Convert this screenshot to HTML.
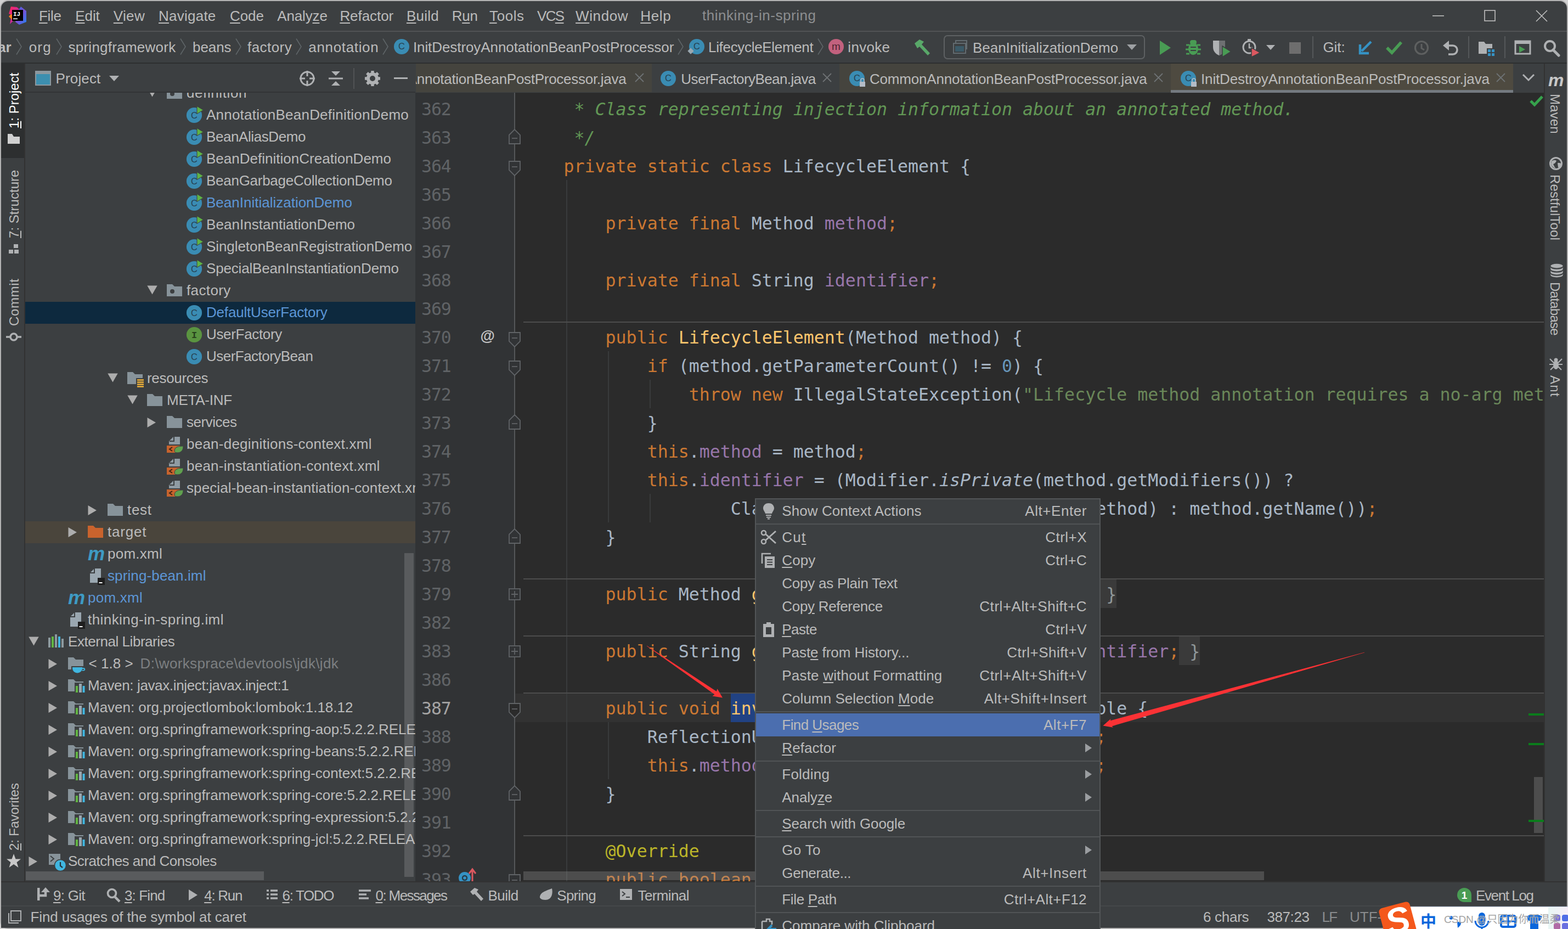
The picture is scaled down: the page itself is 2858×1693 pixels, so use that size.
<!DOCTYPE html>
<html lang="en"><head><meta charset="utf-8"><title>thinking-in-spring</title><style>
html,body{margin:0;padding:0;}
body{width:2858px;height:1693px;position:relative;overflow:hidden;background:#d2d2d2;font-family:"Liberation Sans", "Noto Sans CJK SC", sans-serif;}
.t{position:absolute;white-space:pre;font-family:"Liberation Sans", "Noto Sans CJK SC", sans-serif;}
.c{position:absolute;white-space:pre;font-family:"DejaVu Sans Mono", "Liberation Mono", monospace;font-size:31.59px;height:52px;line-height:52px;color:#a9b7c6;}
.ln{position:absolute;white-space:pre;font-family:"DejaVu Sans Mono", "Liberation Mono", monospace;font-size:31.56px;height:52px;line-height:52px;color:#606366;letter-spacing:-1.1px;}
u{text-decoration:underline;text-decoration-thickness:2px;text-underline-offset:3px;}
.fd{display:inline-block;position:relative;top:-1px;height:52px;line-height:54px;vertical-align:top;background:#3a3a3a;color:#8f9799}
.sel{display:inline-block;position:relative;top:-1px;height:52px;line-height:54px;vertical-align:top;background:#214283}
.k{color:#cc7832} .f{color:#9876aa} .s{color:#6a8759} .d{color:#629755;font-style:italic} .n{color:#6897bb} .m{color:#ffc66d} .a{color:#bbb529} .i{font-style:italic}
.v{position:absolute;white-space:pre;font-family:"Liberation Sans", "Noto Sans CJK SC", sans-serif;font-size:26px;color:#bbbbbb;line-height:30px;height:30px;transform-origin:0 0;}
</style></head>
<body>
<div style="position:absolute;left:2px;top:2px;width:2854px;height:1689px;background:#3c3f41;border-radius:13px 13px 0 13px;box-shadow:0 0 0 2px #b4b4b4;"></div>
<div style="position:absolute;left:2px;top:56px;width:2854px;height:2px;background:#515355;"></div>
<div style="position:absolute;left:2px;top:114px;width:2854px;height:2px;background:#2d2f30;"></div>
<svg style="position:absolute;left:14px;top:10px;" width="36" height="36" viewBox="0 0 36 36">
<defs><linearGradient id="lg1" x1="0" y1="0" x2="1" y2="1"><stop offset="0" stop-color="#fe2857"/><stop offset="1" stop-color="#b02ad0"/></linearGradient>
<linearGradient id="lg2" x1="0" y1="0" x2="1" y2="1"><stop offset="0" stop-color="#2d6be8"/><stop offset="0.5" stop-color="#7a4fd6"/><stop offset="1" stop-color="#1f86f5"/></linearGradient></defs>
<polygon points="6,2 17,3 21,7 20,20 8,30 4,34 7,17 2,15" fill="url(#lg1)"/>
<polygon points="2,20 6,16 9,17 8,26" fill="#fc801d"/>
<polygon points="24,2 34,10 34,30 21,35 14,30 20,8" fill="url(#lg2)"/>
<rect x="8" y="8" width="20" height="20" fill="#000"/>
<text x="10" y="18.5" font-family="Liberation Mono, monospace" font-weight="bold" font-size="11" fill="#fff">IJ</text>
<rect x="10" y="23.5" width="8" height="1.6" fill="#fff"/>
</svg>
<div class="t" style="left:71.0px;top:9.0px;height:40px;line-height:40px;font-size:26px;color:#bbbbbb;letter-spacing:-0.35px;"><u>F</u>ile</div>
<div class="t" style="left:137.2px;top:9.0px;height:40px;line-height:40px;font-size:26px;color:#bbbbbb;letter-spacing:-0.05px;"><u>E</u>dit</div>
<div class="t" style="left:206.8px;top:9.0px;height:40px;line-height:40px;font-size:26px;color:#bbbbbb;letter-spacing:0.33px;"><u>V</u>iew</div>
<div class="t" style="left:289.0px;top:9.0px;height:40px;line-height:40px;font-size:26px;color:#bbbbbb;letter-spacing:0.24px;"><u>N</u>avigate</div>
<div class="t" style="left:419.1px;top:9.0px;height:40px;line-height:40px;font-size:26px;color:#bbbbbb;letter-spacing:-0.11px;"><u>C</u>ode</div>
<div class="t" style="left:505.2px;top:9.0px;height:40px;line-height:40px;font-size:26px;color:#bbbbbb;letter-spacing:-0.14px;">Analy<u>z</u>e</div>
<div class="t" style="left:619.4px;top:9.0px;height:40px;line-height:40px;font-size:26px;color:#bbbbbb;letter-spacing:-0.07px;"><u>R</u>efactor</div>
<div class="t" style="left:740.9px;top:9.0px;height:40px;line-height:40px;font-size:26px;color:#bbbbbb;letter-spacing:0.22px;"><u>B</u>uild</div>
<div class="t" style="left:823.7px;top:9.0px;height:40px;line-height:40px;font-size:26px;color:#bbbbbb;letter-spacing:-0.27px;">R<u>u</u>n</div>
<div class="t" style="left:892.1px;top:9.0px;height:40px;line-height:40px;font-size:26px;color:#bbbbbb;letter-spacing:0.56px;"><u>T</u>ools</div>
<div class="t" style="left:978.9px;top:9.0px;height:40px;line-height:40px;font-size:26px;color:#bbbbbb;letter-spacing:-1.60px;">VC<u>S</u></div>
<div class="t" style="left:1049.1px;top:9.0px;height:40px;line-height:40px;font-size:26px;color:#bbbbbb;letter-spacing:0.59px;"><u>W</u>indow</div>
<div class="t" style="left:1167.2px;top:9.0px;height:40px;line-height:40px;font-size:26px;color:#bbbbbb;letter-spacing:0.66px;"><u>H</u>elp</div>
<div class="t" style="left:1280px;top:8.0px;height:40px;line-height:40px;font-size:26px;color:#8c8e90;letter-spacing:0.53px;">thinking-in-spring</div>
<svg style="position:absolute;left:2600px;top:10px;" width="240" height="40" viewBox="0 0 240 40">
<rect x="11" y="18" width="21" height="1.6" fill="#c0c0c0"/>
<rect x="106" y="9" width="19" height="19" fill="none" stroke="#c0c0c0" stroke-width="1.6"/>
<path d="M200 9 L220 29 M220 9 L200 29" stroke="#c0c0c0" stroke-width="1.6" fill="none"/>
</svg>
<div class="t" style="left:-4px;top:66.0px;height:40px;line-height:40px;font-size:26px;color:#bbbbbb;font-weight:bold;">ar</div>
<svg style="position:absolute;left:28px;top:69px;" width="14" height="32" viewBox="0 0 14 32"><path d="M2 1.5 L11 16 L2 30.5" stroke="#5f6568" stroke-width="1.6" fill="none"/></svg>
<svg style="position:absolute;left:101px;top:69px;" width="14" height="32" viewBox="0 0 14 32"><path d="M2 1.5 L11 16 L2 30.5" stroke="#5f6568" stroke-width="1.6" fill="none"/></svg>
<svg style="position:absolute;left:327px;top:69px;" width="14" height="32" viewBox="0 0 14 32"><path d="M2 1.5 L11 16 L2 30.5" stroke="#5f6568" stroke-width="1.6" fill="none"/></svg>
<svg style="position:absolute;left:428px;top:69px;" width="14" height="32" viewBox="0 0 14 32"><path d="M2 1.5 L11 16 L2 30.5" stroke="#5f6568" stroke-width="1.6" fill="none"/></svg>
<svg style="position:absolute;left:538px;top:69px;" width="14" height="32" viewBox="0 0 14 32"><path d="M2 1.5 L11 16 L2 30.5" stroke="#5f6568" stroke-width="1.6" fill="none"/></svg>
<svg style="position:absolute;left:696px;top:69px;" width="14" height="32" viewBox="0 0 14 32"><path d="M2 1.5 L11 16 L2 30.5" stroke="#5f6568" stroke-width="1.6" fill="none"/></svg>
<svg style="position:absolute;left:1234px;top:69px;" width="14" height="32" viewBox="0 0 14 32"><path d="M2 1.5 L11 16 L2 30.5" stroke="#5f6568" stroke-width="1.6" fill="none"/></svg>
<svg style="position:absolute;left:1489px;top:69px;" width="14" height="32" viewBox="0 0 14 32"><path d="M2 1.5 L11 16 L2 30.5" stroke="#5f6568" stroke-width="1.6" fill="none"/></svg>
<div class="t" style="left:52.7px;top:66.0px;height:40px;line-height:40px;font-size:26px;color:#bbbbbb;letter-spacing:1.21px;">org</div>
<div class="t" style="left:124.5px;top:66.0px;height:40px;line-height:40px;font-size:26px;color:#bbbbbb;letter-spacing:0.25px;">springframework</div>
<div class="t" style="left:351.1px;top:66.0px;height:40px;line-height:40px;font-size:26px;color:#bbbbbb;letter-spacing:-0.09px;">beans</div>
<div class="t" style="left:451.0px;top:66.0px;height:40px;line-height:40px;font-size:26px;color:#bbbbbb;letter-spacing:0.45px;">factory</div>
<div class="t" style="left:562.3px;top:66.0px;height:40px;line-height:40px;font-size:26px;color:#bbbbbb;letter-spacing:0.66px;">annotation</div>
<div class="t" style="left:752.9px;top:66.0px;height:40px;line-height:40px;font-size:26px;color:#bbbbbb;letter-spacing:-0.08px;">InitDestroyAnnotationBeanPostProcessor</div>
<div class="t" style="left:1291.0px;top:66.0px;height:40px;line-height:40px;font-size:26px;color:#bbbbbb;letter-spacing:-0.32px;">LifecycleElement</div>
<div class="t" style="left:1545.3px;top:66.0px;height:40px;line-height:40px;font-size:26px;color:#bbbbbb;letter-spacing:0.32px;">invoke</div>
<svg style="position:absolute;left:716px;top:69px;" width="36" height="36" viewBox="0 0 36 36"><circle cx="16" cy="16" r="14" fill="#3a8cb3"/><text x="16" y="21.4" text-anchor="middle" font-family="Liberation Sans, sans-serif" font-size="16.5" fill="#26404f">C</text></svg>
<svg style="position:absolute;left:1254px;top:69px;" width="36" height="36" viewBox="0 0 36 36"><circle cx="16" cy="16" r="14" fill="#3a8cb3"/><text x="16" y="21.4" text-anchor="middle" font-family="Liberation Sans, sans-serif" font-size="16.5" fill="#26404f">C</text></svg>
<svg style="position:absolute;left:1252px;top:86px;" width="14" height="14" viewBox="0 0 14 14"><rect x="3" y="3" width="8" height="8" transform="rotate(45 7 7)" fill="#9aa7b0"/></svg>
<svg style="position:absolute;left:1508px;top:69px;" width="36" height="36" viewBox="0 0 36 36"><circle cx="16" cy="16" r="14" fill="#c2617e"/><text x="16" y="22.3" text-anchor="middle" font-family="Liberation Sans, sans-serif" font-size="19" fill="#4a2530">m</text></svg>
<svg style="position:absolute;left:1664px;top:70px;" width="36" height="32" viewBox="0 0 36 32"><path d="M3 9 L12 2 L20 6 L16 11 L31 27 L27 31 L12 15 L8 18 Z" fill="#59a869"/></svg>
<div style="position:absolute;left:1720px;top:64px;width:363px;height:40px;border:2px solid #5e6163;border-radius:7px;background:#3c3f41;"></div>
<svg style="position:absolute;left:1736px;top:72px;" width="30" height="28" viewBox="0 0 30 28"><rect x="6" y="2" width="20" height="15" fill="none" stroke="#626b70" stroke-width="2"/><rect x="2" y="7" width="22" height="18" fill="#3c3f41" stroke="#626b70" stroke-width="2"/><rect x="5" y="12" width="16" height="10" fill="#3b5a68"/></svg>
<div class="t" style="left:1773px;top:67.0px;height:40px;line-height:40px;font-size:26px;color:#bbbbbb;letter-spacing:-0.04px;">BeanInitializationDemo</div>
<svg style="position:absolute;left:2052px;top:78px;" width="22" height="16" viewBox="0 0 22 16"><polygon points="2,3 20,3 11,13" fill="#9da0a3"/></svg>
<svg style="position:absolute;left:2112px;top:72px;" width="24" height="30" viewBox="0 0 24 30"><polygon points="2,2 22,15 2,28" fill="#499c54"/></svg>
<svg style="position:absolute;left:2160px;top:70px;" width="30" height="34" viewBox="0 0 30 34"><ellipse cx="15" cy="19" rx="9" ry="11" fill="#499c54"/><rect x="9" y="3" width="12" height="8" rx="4" fill="#499c54"/><path d="M2 12 H8 M22 12 H28 M1 20 H7 M23 20 H29 M2 28 H8 M22 28 H28" stroke="#499c54" stroke-width="3"/><path d="M10 16 H20 M10 22 H20" stroke="#3c3f41" stroke-width="2"/></svg>
<svg style="position:absolute;left:2208px;top:70px;" width="38" height="34" viewBox="0 0 38 34"><path d="M3 4 H25 V16 C25 24 19 29 14 31 C9 29 3 24 3 16 Z" fill="#afb1b3"/><path d="M14 4 H25 V16 C25 24 19 29 14 31 Z" fill="#6e7072"/><polygon points="20,14 36,24 20,34" fill="#499c54" stroke="#3c3f41" stroke-width="1.5"/></svg>
<svg style="position:absolute;left:2262px;top:70px;" width="38" height="34" viewBox="0 0 38 34"><circle cx="15" cy="16" r="11" fill="none" stroke="#afb1b3" stroke-width="3"/><path d="M15 9 V17 H21" stroke="#afb1b3" stroke-width="2.5" fill="none"/><rect x="12" y="1" width="6" height="4" fill="#afb1b3"/><polygon points="19,17 35,26 19,34" fill="#db5860" stroke="#3c3f41" stroke-width="1.5"/></svg>
<svg style="position:absolute;left:2306px;top:80px;" width="20" height="14" viewBox="0 0 20 14"><polygon points="2,2 18,2 10,11" fill="#afb1b3"/></svg>
<div style="position:absolute;left:2350px;top:77px;width:21px;height:21px;background:#6e6e6e;"></div>
<div style="position:absolute;left:2392px;top:66px;width:2px;height:40px;background:#55585a;"></div>
<div class="t" style="left:2411.5px;top:66.0px;height:40px;line-height:40px;font-size:26px;color:#bbbbbb;letter-spacing:-0.11px;">Git:</div>
<svg style="position:absolute;left:2474px;top:72px;" width="30" height="30" viewBox="0 0 30 30"><path d="M25 4 L8 21" stroke="#3592c4" stroke-width="4.5" fill="none"/><path d="M5 9 V25 H21" stroke="#3592c4" stroke-width="4.5" fill="none"/></svg>
<svg style="position:absolute;left:2524px;top:72px;" width="34" height="30" viewBox="0 0 34 30"><path d="M4 15 L13 24 L30 5" stroke="#499c54" stroke-width="5.5" fill="none"/></svg>
<svg style="position:absolute;left:2576px;top:72px;" width="32" height="32" viewBox="0 0 32 32"><circle cx="15" cy="15" r="11.5" fill="none" stroke="#5e6060" stroke-width="3.2"/><path d="M15 8 V16 L20 19" stroke="#5e6060" stroke-width="3" fill="none"/></svg>
<svg style="position:absolute;left:2628px;top:70px;" width="34" height="34" viewBox="0 0 34 34"><path d="M7 13 H20 a8 8 0 0 1 0 16 H12" stroke="#afb1b3" stroke-width="3.5" fill="none"/><polygon points="2,13 13,4 13,22" fill="#afb1b3"/></svg>
<div style="position:absolute;left:2676px;top:66px;width:2px;height:40px;background:#55585a;"></div>
<svg style="position:absolute;left:2693px;top:72px;" width="34" height="30" viewBox="0 0 34 30"><path d="M2 4 H12 L15 8 H27 V26 H2 Z" fill="#afb1b3"/><rect x="17" y="16" width="14" height="14" fill="#3c3f41"/><rect x="19" y="18" width="5" height="5" fill="#3592c4"/><rect x="26" y="18" width="5" height="5" fill="#3592c4"/><rect x="19" y="25" width="5" height="5" fill="#3592c4"/><rect x="26" y="25" width="5" height="5" fill="#3592c4"/></svg>
<div style="position:absolute;left:2742px;top:66px;width:2px;height:40px;background:#55585a;"></div>
<svg style="position:absolute;left:2760px;top:72px;" width="32" height="30" viewBox="0 0 32 30"><rect x="2" y="3" width="27" height="23" fill="none" stroke="#afb1b3" stroke-width="3"/><rect x="2" y="3" width="27" height="5" fill="#afb1b3"/><polygon points="9,12 20,18 9,24" fill="#499c54"/></svg>
<svg style="position:absolute;left:2812px;top:70px;" width="34" height="34" viewBox="0 0 34 34"><circle cx="13" cy="14" r="9" fill="none" stroke="#afb1b3" stroke-width="4"/><path d="M19 21 L29 31" stroke="#afb1b3" stroke-width="5" stroke-linecap="round"/></svg>
<div style="position:absolute;left:2px;top:116px;width:44px;height:1491px;background:#3c3f41;"></div>
<div style="position:absolute;left:2px;top:116px;width:44px;height:172px;background:#2d2f30;"></div>
<div style="position:absolute;left:44px;top:116px;width:2px;height:1491px;background:#323232;"></div>
<div class="v" style="left:11px;top:233.5px;color:#ffffff;font-size:24px;letter-spacing:0.00px;transform:rotate(-90deg);"><u>1</u>: Project</div>
<svg style="position:absolute;left:13px;top:243px;" width="24" height="20" viewBox="0 0 24 20"><path d="M1 1 H9 L12 6 H23 V19 H1 Z" fill="#d0d0d0"/></svg>
<div class="v" style="left:11px;top:434px;color:#bbbbbb;font-size:24px;letter-spacing:0.03px;transform:rotate(-90deg);"><u>7</u>: Structure</div>
<svg style="position:absolute;left:15px;top:444px;" width="20" height="20" viewBox="0 0 20 20"><rect x="10" y="1" width="8" height="7" fill="#afb1b3"/><rect x="1" y="11" width="8" height="7" fill="#afb1b3"/><rect x="11" y="11" width="8" height="7" fill="#afb1b3"/></svg>
<div class="v" style="left:11px;top:594px;color:#bbbbbb;font-size:24px;letter-spacing:0.64px;transform:rotate(-90deg);">Commit</div>
<svg style="position:absolute;left:11px;top:603px;" width="28" height="22" viewBox="0 0 28 22"><circle cx="14" cy="11" r="6" fill="none" stroke="#afb1b3" stroke-width="3.4"/><path d="M0 11 H8 M20 11 H28" stroke="#afb1b3" stroke-width="3.4"/></svg>
<div class="v" style="left:11px;top:1550px;color:#bbbbbb;font-size:24px;letter-spacing:-0.22px;transform:rotate(-90deg);"><u>2</u>: Favorites</div>
<svg style="position:absolute;left:11px;top:1555px;" width="28" height="28" viewBox="0 0 28 28"><polygon points="14,1 17.5,10.5 27,10.5 19.5,16.5 22.5,26 14,20 5.5,26 8.5,16.5 1,10.5 10.5,10.5" fill="#c8c8c8"/></svg>
<div style="position:absolute;left:2814px;top:116px;width:42px;height:1491px;background:#3c3f41;"></div>
<div style="position:absolute;left:2814px;top:116px;width:2px;height:1491px;background:#323232;"></div>
<div class="t" style="left:2822px;top:126.0px;height:40px;line-height:40px;font-size:32px;color:#c8c8c8;font-weight:bold;font-style:italic;">m</div>
<div class="v" style="left:2849px;top:170.5px;color:#bbbbbb;font-size:24px;letter-spacing:0.13px;transform:rotate(90deg);">Maven</div>
<svg style="position:absolute;left:2823px;top:285px;" width="26" height="26" viewBox="0 0 26 26"><circle cx="13" cy="13" r="10.5" fill="none" stroke="#afb1b3" stroke-width="3"/><path d="M5 9 Q10 5 14 8 Q12 13 8 14 Q10 19 13 22 Q6 20 4 14 Z M16 12 Q22 11 23 15 Q21 21 17 20 Z" fill="#afb1b3"/></svg>
<div class="v" style="left:2849px;top:318px;color:#bbbbbb;font-size:24px;letter-spacing:0.11px;transform:rotate(90deg);">RestfulTool</div>
<svg style="position:absolute;left:2824.5px;top:479.5px;" width="25" height="26" viewBox="0 0 25 26"><ellipse cx="12.5" cy="4.6" rx="11.2" ry="3.8" fill="#afb1b3"/><path d="M1.3 7 a11.2 3.8 0 0 0 22.4 0 v3.6 a11.2 3.8 0 0 1 -22.4 0 Z M1.3 13 a11.2 3.8 0 0 0 22.4 0 v3.6 a11.2 3.8 0 0 1 -22.4 0 Z M1.3 19 a11.2 3.8 0 0 0 22.4 0 v2.6 a11.2 3.8 0 0 1 -22.4 0 Z" fill="#afb1b3"/></svg>
<div class="v" style="left:2849px;top:514px;color:#bbbbbb;font-size:24px;letter-spacing:-0.72px;transform:rotate(90deg);">Database</div>
<svg style="position:absolute;left:2823px;top:650px;" width="26" height="26" viewBox="0 0 26 26"><ellipse cx="13" cy="15" rx="5" ry="8" fill="#afb1b3"/><circle cx="13" cy="6" r="3.5" fill="#afb1b3"/><path d="M2 4 L9 11 M24 4 L17 11 M1 14 H8 M18 14 H25 M3 24 L9 18 M23 24 L17 18" stroke="#afb1b3" stroke-width="2.2"/></svg>
<div class="v" style="left:2849px;top:684px;color:#bbbbbb;font-size:24px;letter-spacing:1.36px;transform:rotate(90deg);">Ant</div>
<div style="position:absolute;left:46px;top:116px;width:711px;height:1491px;background:#3c3f41;"></div>
<div style="position:absolute;left:46px;top:169px;width:711px;height:1438px;overflow:hidden;">
<div style="position:absolute;left:0;top:381px;width:711px;height:40px;background:#0d293e"></div>
<div style="position:absolute;left:0;top:781px;width:711px;height:40px;background:#4a453c"></div>
<div style="position:absolute;left:691px;top:839px;width:17px;height:590px;background:#595b5d"></div>
<div style="position:absolute;left:1px;top:1419px;width:434px;height:16px;background:#595b5d"></div>
<svg style="position:absolute;left:221.5px;top:-9.5px" width="20" height="20" viewBox="0 0 20 20"><polygon points="0.3,0.5 18.7,0.5 9.5,16.5" fill="#adadad"/></svg>
<svg style="position:absolute;left:258px;top:-15px;overflow:visible" width="32" height="32" viewBox="0 0 32 32"><path d="M0 4 H10 L14 8 H28 V26 H0 Z" fill="#87939a"/><circle cx="10" cy="17" r="4" fill="#3c3f41"/></svg>
<div class="t" style="left:294px;top:-20px;height:40px;line-height:40px;font-size:26px;letter-spacing:0.59px;color:#bbbbbb">definition</div>
<svg style="position:absolute;left:294px;top:25px;overflow:visible" width="32" height="32" viewBox="0 0 32 32"><circle cx="14" cy="16" r="14.1" fill="#3a8cb3"/><text x="14" y="21.8" text-anchor="middle" font-family="Liberation Sans, sans-serif" font-size="16.5" fill="#26404f">C</text><polygon points="19,-0.5 30.5,6.5 19,13.5" fill="#5fb345" stroke="#3c3f41" stroke-width="1"/></svg>
<div class="t" style="left:330px;top:20px;height:40px;line-height:40px;font-size:26px;letter-spacing:0.22px;color:#bbbbbb">AnnotationBeanDefinitionDemo</div>
<svg style="position:absolute;left:294px;top:65px;overflow:visible" width="32" height="32" viewBox="0 0 32 32"><circle cx="14" cy="16" r="14.1" fill="#3a8cb3"/><text x="14" y="21.8" text-anchor="middle" font-family="Liberation Sans, sans-serif" font-size="16.5" fill="#26404f">C</text><polygon points="19,-0.5 30.5,6.5 19,13.5" fill="#5fb345" stroke="#3c3f41" stroke-width="1"/></svg>
<div class="t" style="left:330px;top:60px;height:40px;line-height:40px;font-size:26px;letter-spacing:-0.42px;color:#bbbbbb">BeanAliasDemo</div>
<svg style="position:absolute;left:294px;top:105px;overflow:visible" width="32" height="32" viewBox="0 0 32 32"><circle cx="14" cy="16" r="14.1" fill="#3a8cb3"/><text x="14" y="21.8" text-anchor="middle" font-family="Liberation Sans, sans-serif" font-size="16.5" fill="#26404f">C</text><polygon points="19,-0.5 30.5,6.5 19,13.5" fill="#5fb345" stroke="#3c3f41" stroke-width="1"/></svg>
<div class="t" style="left:330px;top:100px;height:40px;line-height:40px;font-size:26px;letter-spacing:0.01px;color:#bbbbbb">BeanDefinitionCreationDemo</div>
<svg style="position:absolute;left:294px;top:145px;overflow:visible" width="32" height="32" viewBox="0 0 32 32"><circle cx="14" cy="16" r="14.1" fill="#3a8cb3"/><text x="14" y="21.8" text-anchor="middle" font-family="Liberation Sans, sans-serif" font-size="16.5" fill="#26404f">C</text><polygon points="19,-0.5 30.5,6.5 19,13.5" fill="#5fb345" stroke="#3c3f41" stroke-width="1"/></svg>
<div class="t" style="left:330px;top:140px;height:40px;line-height:40px;font-size:26px;letter-spacing:-0.27px;color:#bbbbbb">BeanGarbageCollectionDemo</div>
<svg style="position:absolute;left:294px;top:185px;overflow:visible" width="32" height="32" viewBox="0 0 32 32"><circle cx="14" cy="16" r="14.1" fill="#3a8cb3"/><text x="14" y="21.8" text-anchor="middle" font-family="Liberation Sans, sans-serif" font-size="16.5" fill="#26404f">C</text><polygon points="19,-0.5 30.5,6.5 19,13.5" fill="#5fb345" stroke="#3c3f41" stroke-width="1"/></svg>
<div class="t" style="left:330px;top:180px;height:40px;line-height:40px;font-size:26px;letter-spacing:0.00px;color:#5c96d6">BeanInitializationDemo</div>
<svg style="position:absolute;left:294px;top:225px;overflow:visible" width="32" height="32" viewBox="0 0 32 32"><circle cx="14" cy="16" r="14.1" fill="#3a8cb3"/><text x="14" y="21.8" text-anchor="middle" font-family="Liberation Sans, sans-serif" font-size="16.5" fill="#26404f">C</text><polygon points="19,-0.5 30.5,6.5 19,13.5" fill="#5fb345" stroke="#3c3f41" stroke-width="1"/></svg>
<div class="t" style="left:330px;top:220px;height:40px;line-height:40px;font-size:26px;letter-spacing:0.04px;color:#bbbbbb">BeanInstantiationDemo</div>
<svg style="position:absolute;left:294px;top:265px;overflow:visible" width="32" height="32" viewBox="0 0 32 32"><circle cx="14" cy="16" r="14.1" fill="#3a8cb3"/><text x="14" y="21.8" text-anchor="middle" font-family="Liberation Sans, sans-serif" font-size="16.5" fill="#26404f">C</text><polygon points="19,-0.5 30.5,6.5 19,13.5" fill="#5fb345" stroke="#3c3f41" stroke-width="1"/></svg>
<div class="t" style="left:330px;top:260px;height:40px;line-height:40px;font-size:26px;letter-spacing:-0.07px;color:#bbbbbb">SingletonBeanRegistrationDemo</div>
<svg style="position:absolute;left:294px;top:305px;overflow:visible" width="32" height="32" viewBox="0 0 32 32"><circle cx="14" cy="16" r="14.1" fill="#3a8cb3"/><text x="14" y="21.8" text-anchor="middle" font-family="Liberation Sans, sans-serif" font-size="16.5" fill="#26404f">C</text><polygon points="19,-0.5 30.5,6.5 19,13.5" fill="#5fb345" stroke="#3c3f41" stroke-width="1"/></svg>
<div class="t" style="left:330px;top:300px;height:40px;line-height:40px;font-size:26px;letter-spacing:-0.17px;color:#bbbbbb">SpecialBeanInstantiationDemo</div>
<svg style="position:absolute;left:221.5px;top:350.5px" width="20" height="20" viewBox="0 0 20 20"><polygon points="0.3,0.5 18.7,0.5 9.5,16.5" fill="#adadad"/></svg>
<svg style="position:absolute;left:258px;top:345px;overflow:visible" width="32" height="32" viewBox="0 0 32 32"><path d="M0 4 H10 L14 8 H28 V26 H0 Z" fill="#87939a"/><circle cx="10" cy="17" r="4" fill="#3c3f41"/></svg>
<div class="t" style="left:294px;top:340px;height:40px;line-height:40px;font-size:26px;letter-spacing:0.37px;color:#bbbbbb">factory</div>
<svg style="position:absolute;left:294px;top:385px;overflow:visible" width="32" height="32" viewBox="0 0 32 32"><circle cx="14" cy="16" r="14.1" fill="#3a8cb3"/><text x="14" y="21.8" text-anchor="middle" font-family="Liberation Sans, sans-serif" font-size="16.5" fill="#26404f">C</text></svg>
<div class="t" style="left:330px;top:380px;height:40px;line-height:40px;font-size:26px;letter-spacing:-0.19px;color:#5c96d6">DefaultUserFactory</div>
<svg style="position:absolute;left:294px;top:425px;overflow:visible" width="32" height="32" viewBox="0 0 32 32"><circle cx="14" cy="16" r="14.1" fill="#5a9440"/><text x="14" y="21.6" text-anchor="middle" font-family="Liberation Mono, monospace" font-weight="bold" font-size="17" fill="#27401c">I</text></svg>
<div class="t" style="left:330px;top:420px;height:40px;line-height:40px;font-size:26px;letter-spacing:-0.33px;color:#bbbbbb">UserFactory</div>
<svg style="position:absolute;left:294px;top:465px;overflow:visible" width="32" height="32" viewBox="0 0 32 32"><circle cx="14" cy="16" r="14.1" fill="#3a8cb3"/><text x="14" y="21.8" text-anchor="middle" font-family="Liberation Sans, sans-serif" font-size="16.5" fill="#26404f">C</text></svg>
<div class="t" style="left:330px;top:460px;height:40px;line-height:40px;font-size:26px;letter-spacing:-0.53px;color:#bbbbbb">UserFactoryBean</div>
<svg style="position:absolute;left:149.5px;top:510.5px" width="20" height="20" viewBox="0 0 20 20"><polygon points="0.3,0.5 18.7,0.5 9.5,16.5" fill="#adadad"/></svg>
<svg style="position:absolute;left:186px;top:505px;overflow:visible" width="32" height="32" viewBox="0 0 32 32"><path d="M0 4 H10 L14 8 H28 V26 H0 Z" fill="#87939a"/><rect x="16" y="15" width="14" height="18" fill="#3c3f41"/><path d="M18 18.5 H30 M18 22.5 H30 M18 26.5 H30 M18 30.5 H30" stroke="#f0b238" stroke-width="2.3"/></svg>
<div class="t" style="left:222px;top:500px;height:40px;line-height:40px;font-size:26px;letter-spacing:-0.32px;color:#bbbbbb">resources</div>
<svg style="position:absolute;left:185.5px;top:550.5px" width="20" height="20" viewBox="0 0 20 20"><polygon points="0.3,0.5 18.7,0.5 9.5,16.5" fill="#adadad"/></svg>
<svg style="position:absolute;left:222px;top:545px;overflow:visible" width="32" height="32" viewBox="0 0 32 32"><path d="M0 4 H10 L14 8 H28 V26 H0 Z" fill="#87939a"/></svg>
<div class="t" style="left:258px;top:540px;height:40px;line-height:40px;font-size:26px;letter-spacing:-0.24px;color:#bbbbbb">META-INF</div>
<svg style="position:absolute;left:222px;top:590.5px" width="20" height="22" viewBox="0 0 20 22"><polygon points="0.5,1 16,10 0.5,19" fill="#adadad"/></svg>
<svg style="position:absolute;left:258px;top:585px;overflow:visible" width="32" height="32" viewBox="0 0 32 32"><path d="M0 4 H10 L14 8 H28 V26 H0 Z" fill="#87939a"/></svg>
<div class="t" style="left:294px;top:580px;height:40px;line-height:40px;font-size:26px;letter-spacing:-0.48px;color:#bbbbbb">services</div>
<svg style="position:absolute;left:258px;top:625px;overflow:visible" width="32" height="32" viewBox="0 0 32 32"><path d="M4 10 L12 2 H24 V16 H4 Z" fill="#8f9ba3"/><path d="M5 10 H13 V2" fill="none" stroke="#3c3f41" stroke-width="2"/><rect x="0" y="18" width="24" height="13" fill="#c7632d"/><path d="M10 21 L5 24.5 L10 28" stroke="#3c2415" stroke-width="2" fill="none"/><path d="M14 28 C14 20 22 19 30 19 C30 27 26 31 19 31 C16 31 14 30 14 28 Z" fill="#5fa04e" stroke="#3c3f41" stroke-width="1"/></svg>
<div class="t" style="left:294px;top:620px;height:40px;line-height:40px;font-size:26px;letter-spacing:0.24px;color:#bbbbbb">bean-deginitions-context.xml</div>
<svg style="position:absolute;left:258px;top:665px;overflow:visible" width="32" height="32" viewBox="0 0 32 32"><path d="M4 10 L12 2 H24 V16 H4 Z" fill="#8f9ba3"/><path d="M5 10 H13 V2" fill="none" stroke="#3c3f41" stroke-width="2"/><rect x="0" y="18" width="24" height="13" fill="#c7632d"/><path d="M10 21 L5 24.5 L10 28" stroke="#3c2415" stroke-width="2" fill="none"/><path d="M14 28 C14 20 22 19 30 19 C30 27 26 31 19 31 C16 31 14 30 14 28 Z" fill="#5fa04e" stroke="#3c3f41" stroke-width="1"/></svg>
<div class="t" style="left:294px;top:660px;height:40px;line-height:40px;font-size:26px;letter-spacing:0.24px;color:#bbbbbb">bean-instantiation-context.xml</div>
<svg style="position:absolute;left:258px;top:705px;overflow:visible" width="32" height="32" viewBox="0 0 32 32"><path d="M4 10 L12 2 H24 V16 H4 Z" fill="#8f9ba3"/><path d="M5 10 H13 V2" fill="none" stroke="#3c3f41" stroke-width="2"/><rect x="0" y="18" width="24" height="13" fill="#c7632d"/><path d="M10 21 L5 24.5 L10 28" stroke="#3c2415" stroke-width="2" fill="none"/><path d="M14 28 C14 20 22 19 30 19 C30 27 26 31 19 31 C16 31 14 30 14 28 Z" fill="#5fa04e" stroke="#3c3f41" stroke-width="1"/></svg>
<div class="t" style="left:294px;top:700px;height:40px;line-height:40px;font-size:26px;letter-spacing:0.1px;color:#bbbbbb">special-bean-instantiation-context.xml</div>
<svg style="position:absolute;left:114px;top:750.5px" width="20" height="22" viewBox="0 0 20 22"><polygon points="0.5,1 16,10 0.5,19" fill="#adadad"/></svg>
<svg style="position:absolute;left:150px;top:745px;overflow:visible" width="32" height="32" viewBox="0 0 32 32"><path d="M0 4 H10 L14 8 H28 V26 H0 Z" fill="#87939a"/></svg>
<div class="t" style="left:186px;top:740px;height:40px;line-height:40px;font-size:26px;letter-spacing:0.72px;color:#bbbbbb">test</div>
<svg style="position:absolute;left:78px;top:790.5px" width="20" height="22" viewBox="0 0 20 22"><polygon points="0.5,1 16,10 0.5,19" fill="#adadad"/></svg>
<svg style="position:absolute;left:114px;top:785px;overflow:visible" width="32" height="32" viewBox="0 0 32 32"><path d="M0 4 H10 L14 8 H28 V26 H0 Z" fill="#c9632d"/></svg>
<div class="t" style="left:150px;top:780px;height:40px;line-height:40px;font-size:26px;letter-spacing:0.80px;color:#bbbbbb">target</div>
<svg style="position:absolute;left:114px;top:825px;overflow:visible" width="32" height="32" viewBox="0 0 32 32"><text x="0" y="27" font-family="Liberation Sans, sans-serif" font-weight="bold" font-style="italic" font-size="35" fill="#3e9bc4">m</text></svg>
<div class="t" style="left:150px;top:820px;height:40px;line-height:40px;font-size:26px;letter-spacing:0.25px;color:#bbbbbb">pom.xml</div>
<svg style="position:absolute;left:114px;top:865px;overflow:visible" width="32" height="32" viewBox="0 0 32 32"><path d="M4 10 L12 2 H24 V28 H4 Z" fill="#9aa7b0"/><path d="M4 10 H12 V2" fill="none" stroke="#3c3f41" stroke-width="2"/><rect x="18" y="19" width="13" height="13" fill="#1e1e1e"/><rect x="20.5" y="27" width="6" height="2" fill="#fff"/></svg>
<div class="t" style="left:150px;top:860px;height:40px;line-height:40px;font-size:26px;letter-spacing:0.12px;color:#5c96d6">spring-bean.iml</div>
<svg style="position:absolute;left:78px;top:905px;overflow:visible" width="32" height="32" viewBox="0 0 32 32"><text x="0" y="27" font-family="Liberation Sans, sans-serif" font-weight="bold" font-style="italic" font-size="35" fill="#3e9bc4">m</text></svg>
<div class="t" style="left:114px;top:900px;height:40px;line-height:40px;font-size:26px;letter-spacing:0.25px;color:#5c96d6">pom.xml</div>
<svg style="position:absolute;left:78px;top:945px;overflow:visible" width="32" height="32" viewBox="0 0 32 32"><path d="M4 10 L12 2 H24 V28 H4 Z" fill="#9aa7b0"/><path d="M4 10 H12 V2" fill="none" stroke="#3c3f41" stroke-width="2"/><rect x="18" y="19" width="13" height="13" fill="#1e1e1e"/><rect x="20.5" y="27" width="6" height="2" fill="#fff"/></svg>
<div class="t" style="left:114px;top:940px;height:40px;line-height:40px;font-size:26px;letter-spacing:0.43px;color:#bbbbbb">thinking-in-spring.iml</div>
<svg style="position:absolute;left:5.5px;top:990.5px" width="20" height="20" viewBox="0 0 20 20"><polygon points="0.3,0.5 18.7,0.5 9.5,16.5" fill="#adadad"/></svg>
<svg style="position:absolute;left:42px;top:985px;overflow:visible" width="32" height="32" viewBox="0 0 32 32"><rect x="0" y="8" width="4" height="18" fill="#8d999f"/><rect x="6" y="6" width="4" height="20" fill="#62b543"/><rect x="12" y="2" width="4" height="24" fill="#8d999f"/><rect x="18" y="6" width="4" height="20" fill="#40b6e0"/><rect x="24" y="10" width="4" height="16" fill="#8d999f"/></svg>
<div class="t" style="left:78px;top:980px;height:40px;line-height:40px;font-size:26px;letter-spacing:-0.45px;color:#bbbbbb">External Libraries</div>
<svg style="position:absolute;left:42px;top:1030.5px" width="20" height="22" viewBox="0 0 20 22"><polygon points="0.5,1 16,10 0.5,19" fill="#adadad"/></svg>
<svg style="position:absolute;left:78px;top:1025px;overflow:visible" width="32" height="32" viewBox="0 0 32 32"><path d="M0 4 H10 L14 8 H28 V26 H0 Z" fill="#87939a"/><rect x="6" y="20" width="26" height="8" fill="#3c3f41"/><path d="M8 22 H26 V24 A9 8.5 0 0 1 8 24 Z" fill="#40b6e0"/><path d="M26 24 h2.5 a1.8 1.8 0 0 1 0 3.6 h-3" fill="none" stroke="#40b6e0" stroke-width="1.8"/></svg>
<div class="t" style="left:115.5px;top:1020px;height:40px;line-height:40px;font-size:26px;letter-spacing:0.05px;color:#bbbbbb">&lt; 1.8 &gt;</div>
<div class="t" style="left:209.5px;top:1020px;height:40px;line-height:40px;font-size:26px;letter-spacing:0.35px;color:#7d8082">D:\worksprace\devtools\jdk\jdk</div>
<svg style="position:absolute;left:42px;top:1070.5px" width="20" height="22" viewBox="0 0 20 22"><polygon points="0.5,1 16,10 0.5,19" fill="#adadad"/></svg>
<svg style="position:absolute;left:78px;top:1065px;overflow:visible" width="32" height="32" viewBox="0 0 32 32"><path d="M0 4 H10 L14 8 H28 V26 H0 Z" fill="#87939a"/><rect x="12" y="10" width="20" height="20" fill="#3c3f41"/><rect x="14" y="16" width="4" height="12" fill="#62b543"/><rect x="20" y="12" width="5" height="16" fill="#9aa7b0"/><rect x="26.5" y="16" width="4" height="12" fill="#40b6e0"/></svg>
<div class="t" style="left:114px;top:1060px;height:40px;line-height:40px;font-size:26px;letter-spacing:-0.36px;color:#bbbbbb">Maven: javax.inject:javax.inject:1</div>
<svg style="position:absolute;left:42px;top:1110.5px" width="20" height="22" viewBox="0 0 20 22"><polygon points="0.5,1 16,10 0.5,19" fill="#adadad"/></svg>
<svg style="position:absolute;left:78px;top:1105px;overflow:visible" width="32" height="32" viewBox="0 0 32 32"><path d="M0 4 H10 L14 8 H28 V26 H0 Z" fill="#87939a"/><rect x="12" y="10" width="20" height="20" fill="#3c3f41"/><rect x="14" y="16" width="4" height="12" fill="#62b543"/><rect x="20" y="12" width="5" height="16" fill="#9aa7b0"/><rect x="26.5" y="16" width="4" height="12" fill="#40b6e0"/></svg>
<div class="t" style="left:114px;top:1100px;height:40px;line-height:40px;font-size:26px;letter-spacing:-0.02px;color:#bbbbbb">Maven: org.projectlombok:lombok:1.18.12</div>
<svg style="position:absolute;left:42px;top:1150.5px" width="20" height="22" viewBox="0 0 20 22"><polygon points="0.5,1 16,10 0.5,19" fill="#adadad"/></svg>
<svg style="position:absolute;left:78px;top:1145px;overflow:visible" width="32" height="32" viewBox="0 0 32 32"><path d="M0 4 H10 L14 8 H28 V26 H0 Z" fill="#87939a"/><rect x="12" y="10" width="20" height="20" fill="#3c3f41"/><rect x="14" y="16" width="4" height="12" fill="#62b543"/><rect x="20" y="12" width="5" height="16" fill="#9aa7b0"/><rect x="26.5" y="16" width="4" height="12" fill="#40b6e0"/></svg>
<div class="t" style="left:114px;top:1140px;height:40px;line-height:40px;font-size:26px;letter-spacing:-0.04px;color:#bbbbbb">Maven: org.springframework:spring-aop:5.2.2.RELEASE</div>
<svg style="position:absolute;left:42px;top:1190.5px" width="20" height="22" viewBox="0 0 20 22"><polygon points="0.5,1 16,10 0.5,19" fill="#adadad"/></svg>
<svg style="position:absolute;left:78px;top:1185px;overflow:visible" width="32" height="32" viewBox="0 0 32 32"><path d="M0 4 H10 L14 8 H28 V26 H0 Z" fill="#87939a"/><rect x="12" y="10" width="20" height="20" fill="#3c3f41"/><rect x="14" y="16" width="4" height="12" fill="#62b543"/><rect x="20" y="12" width="5" height="16" fill="#9aa7b0"/><rect x="26.5" y="16" width="4" height="12" fill="#40b6e0"/></svg>
<div class="t" style="left:114px;top:1180px;height:40px;line-height:40px;font-size:26px;letter-spacing:-0.04px;color:#bbbbbb">Maven: org.springframework:spring-beans:5.2.2.RELEASE</div>
<svg style="position:absolute;left:42px;top:1230.5px" width="20" height="22" viewBox="0 0 20 22"><polygon points="0.5,1 16,10 0.5,19" fill="#adadad"/></svg>
<svg style="position:absolute;left:78px;top:1225px;overflow:visible" width="32" height="32" viewBox="0 0 32 32"><path d="M0 4 H10 L14 8 H28 V26 H0 Z" fill="#87939a"/><rect x="12" y="10" width="20" height="20" fill="#3c3f41"/><rect x="14" y="16" width="4" height="12" fill="#62b543"/><rect x="20" y="12" width="5" height="16" fill="#9aa7b0"/><rect x="26.5" y="16" width="4" height="12" fill="#40b6e0"/></svg>
<div class="t" style="left:114px;top:1220px;height:40px;line-height:40px;font-size:26px;letter-spacing:-0.04px;color:#bbbbbb">Maven: org.springframework:spring-context:5.2.2.RELEASE</div>
<svg style="position:absolute;left:42px;top:1270.5px" width="20" height="22" viewBox="0 0 20 22"><polygon points="0.5,1 16,10 0.5,19" fill="#adadad"/></svg>
<svg style="position:absolute;left:78px;top:1265px;overflow:visible" width="32" height="32" viewBox="0 0 32 32"><path d="M0 4 H10 L14 8 H28 V26 H0 Z" fill="#87939a"/><rect x="12" y="10" width="20" height="20" fill="#3c3f41"/><rect x="14" y="16" width="4" height="12" fill="#62b543"/><rect x="20" y="12" width="5" height="16" fill="#9aa7b0"/><rect x="26.5" y="16" width="4" height="12" fill="#40b6e0"/></svg>
<div class="t" style="left:114px;top:1260px;height:40px;line-height:40px;font-size:26px;letter-spacing:-0.04px;color:#bbbbbb">Maven: org.springframework:spring-core:5.2.2.RELEASE</div>
<svg style="position:absolute;left:42px;top:1310.5px" width="20" height="22" viewBox="0 0 20 22"><polygon points="0.5,1 16,10 0.5,19" fill="#adadad"/></svg>
<svg style="position:absolute;left:78px;top:1305px;overflow:visible" width="32" height="32" viewBox="0 0 32 32"><path d="M0 4 H10 L14 8 H28 V26 H0 Z" fill="#87939a"/><rect x="12" y="10" width="20" height="20" fill="#3c3f41"/><rect x="14" y="16" width="4" height="12" fill="#62b543"/><rect x="20" y="12" width="5" height="16" fill="#9aa7b0"/><rect x="26.5" y="16" width="4" height="12" fill="#40b6e0"/></svg>
<div class="t" style="left:114px;top:1300px;height:40px;line-height:40px;font-size:26px;letter-spacing:-0.04px;color:#bbbbbb">Maven: org.springframework:spring-expression:5.2.2.RELEASE</div>
<svg style="position:absolute;left:42px;top:1350.5px" width="20" height="22" viewBox="0 0 20 22"><polygon points="0.5,1 16,10 0.5,19" fill="#adadad"/></svg>
<svg style="position:absolute;left:78px;top:1345px;overflow:visible" width="32" height="32" viewBox="0 0 32 32"><path d="M0 4 H10 L14 8 H28 V26 H0 Z" fill="#87939a"/><rect x="12" y="10" width="20" height="20" fill="#3c3f41"/><rect x="14" y="16" width="4" height="12" fill="#62b543"/><rect x="20" y="12" width="5" height="16" fill="#9aa7b0"/><rect x="26.5" y="16" width="4" height="12" fill="#40b6e0"/></svg>
<div class="t" style="left:114px;top:1340px;height:40px;line-height:40px;font-size:26px;letter-spacing:-0.04px;color:#bbbbbb">Maven: org.springframework:spring-jcl:5.2.2.RELEASE</div>
<svg style="position:absolute;left:6px;top:1390.5px" width="20" height="22" viewBox="0 0 20 22"><polygon points="0.5,1 16,10 0.5,19" fill="#adadad"/></svg>
<svg style="position:absolute;left:42px;top:1385px;overflow:visible" width="32" height="32" viewBox="0 0 32 32"><rect x="1" y="2" width="21" height="20" fill="#87939a"/><path d="M4 6 L10 11 L4 16" stroke="#3c3f41" stroke-width="2" fill="none"/><circle cx="22" cy="23" r="10.5" fill="#40b6e0" stroke="#3c3f41" stroke-width="1.5"/><path d="M22 17 V24 L26 27" stroke="#24323a" stroke-width="2.2" fill="none"/></svg>
<div class="t" style="left:78px;top:1380px;height:40px;line-height:40px;font-size:26px;letter-spacing:-0.50px;color:#bbbbbb">Scratches and Consoles</div>
</div>
<div style="position:absolute;left:46px;top:116px;width:711px;height:52px;background:#3c3f41;"></div>
<div style="position:absolute;left:46px;top:167px;width:711px;height:2px;background:#323436;"></div>
<svg style="position:absolute;left:64px;top:129px;" width="30" height="28" viewBox="0 0 30 28"><rect x="1" y="1" width="27" height="25" fill="#3c8fb0" stroke="#8d989f" stroke-width="2"/><rect x="1" y="1" width="27" height="5" fill="#8d989f"/></svg>
<div class="t" style="left:101.5px;top:123.0px;height:40px;line-height:40px;font-size:26px;color:#bbbbbb;letter-spacing:0.15px;">Project</div>
<svg style="position:absolute;left:198px;top:136px;" width="20" height="14" viewBox="0 0 20 14"><polygon points="1,2 19,2 10,12" fill="#afb1b3"/></svg>
<svg style="position:absolute;left:545px;top:128px;" width="30" height="30" viewBox="0 0 30 30"><circle cx="15" cy="15" r="12" fill="none" stroke="#afb1b3" stroke-width="3"/><path d="M15 1 V11 M15 19 V29 M1 15 H11 M19 15 H29" stroke="#afb1b3" stroke-width="3"/></svg>
<svg style="position:absolute;left:598px;top:128px;" width="28" height="30" viewBox="0 0 28 30"><path d="M1 15 H27" stroke="#afb1b3" stroke-width="3"/><polygon points="6,2 22,2 14,10" fill="#afb1b3"/><polygon points="6,28 22,28 14,20" fill="#afb1b3"/></svg>
<div style="position:absolute;left:644px;top:124px;width:2px;height:38px;background:#515355;"></div>
<svg style="position:absolute;left:664px;top:128px;" width="30" height="30" viewBox="0 0 30 30"><circle cx="15" cy="15" r="8" fill="none" stroke="#afb1b3" stroke-width="6"/><g stroke="#afb1b3" stroke-width="5.5"><path d="M15 1 V6 M15 24 V29 M1 15 H6 M24 15 H29 M5 5 L8.5 8.5 M21.5 21.5 L25 25 M25 5 L21.5 8.5 M5 25 L8.5 21.5"/></g></svg>
<div style="position:absolute;left:718px;top:141px;width:25px;height:3px;background:#afb1b3;"></div>
<div style="position:absolute;left:757px;top:116px;width:2057px;height:53px;background:#3c3f41;"></div>
<div style="position:absolute;left:758px;top:116px;width:430px;height:52px;background:#45443e;"></div>
<div style="position:absolute;left:1530px;top:116px;width:604px;height:52px;background:#45443e;"></div>
<div style="position:absolute;left:2134px;top:116px;width:624px;height:52px;background:#4e4a40;"></div>
<div style="position:absolute;left:2134px;top:164px;width:624px;height:5px;background:#747a80;"></div>
<div style="position:absolute;left:758px;top:116px;width:430px;height:52px;overflow:hidden;">
<div class="t" style="right:46.67px;top:8px;height:40px;line-height:40px;font-size:26px;letter-spacing:-0.28px;color:#bbbbbb">AutowiredAnnotationBeanPostProcessor.java</div>
</div>
<svg style="position:absolute;left:1156px;top:132px;" width="20" height="20" viewBox="0 0 20 20"><path d="M2 2 L17 17 M17 2 L2 17" stroke="#6e7274" stroke-width="1.8"/></svg>
<svg style="position:absolute;left:1202px;top:127px;" width="36" height="36" viewBox="0 0 36 36"><circle cx="16" cy="16" r="14" fill="#3a8cb3"/><text x="16" y="21.4" text-anchor="middle" font-family="Liberation Sans, sans-serif" font-size="16.5" fill="#26404f">C</text></svg>
<div class="t" style="left:1241.3px;top:124.0px;height:40px;line-height:40px;font-size:26px;color:#bbbbbb;letter-spacing:-0.59px;">UserFactoryBean.java</div>
<svg style="position:absolute;left:1498px;top:132px;" width="20" height="20" viewBox="0 0 20 20"><path d="M2 2 L17 17 M17 2 L2 17" stroke="#6e7274" stroke-width="1.8"/></svg>
<svg style="position:absolute;left:1546px;top:127px;" width="36" height="36" viewBox="0 0 36 36"><circle cx="16" cy="16" r="14" fill="#3a8cb3"/><text x="16" y="21.4" text-anchor="middle" font-family="Liberation Sans, sans-serif" font-size="16.5" fill="#26404f">C</text><rect x="21" y="22" width="10" height="9" fill="#b4bcc6"/><path d="M23 22 v-3 a3 3 0 0 1 6 0 v3" stroke="#b4bcc6" stroke-width="1.6" fill="none"/></svg>
<div class="t" style="left:1585px;top:124.0px;height:40px;line-height:40px;font-size:26px;color:#bbbbbb;letter-spacing:-0.20px;">CommonAnnotationBeanPostProcessor.java</div>
<svg style="position:absolute;left:2102px;top:132px;" width="20" height="20" viewBox="0 0 20 20"><path d="M2 2 L17 17 M17 2 L2 17" stroke="#6e7274" stroke-width="1.8"/></svg>
<svg style="position:absolute;left:2150px;top:127px;" width="36" height="36" viewBox="0 0 36 36"><circle cx="16" cy="16" r="14" fill="#3a8cb3"/><text x="16" y="21.4" text-anchor="middle" font-family="Liberation Sans, sans-serif" font-size="16.5" fill="#26404f">C</text><rect x="21" y="22" width="10" height="9" fill="#b4bcc6"/><path d="M23 22 v-3 a3 3 0 0 1 6 0 v3" stroke="#b4bcc6" stroke-width="1.6" fill="none"/></svg>
<div class="t" style="left:2189px;top:124.0px;height:40px;line-height:40px;font-size:26px;color:#bbbbbb;letter-spacing:-0.14px;">InitDestroyAnnotationBeanPostProcessor.java</div>
<svg style="position:absolute;left:2726px;top:132px;" width="20" height="20" viewBox="0 0 20 20"><path d="M2 2 L17 17 M17 2 L2 17" stroke="#6e7274" stroke-width="1.8"/></svg>
<svg style="position:absolute;left:2774px;top:134px;" width="24" height="16" viewBox="0 0 24 16"><path d="M2 2 L12 12 L22 2" stroke="#afb1b3" stroke-width="3" fill="none"/></svg>
<div style="position:absolute;left:757px;top:169px;width:2057px;height:1438px;overflow:hidden;background:#2b2b2b;">
<div style="position:absolute;left:0;top:0;width:181px;height:1438px;background:#313335;"></div>
<div style="position:absolute;left:182px;top:1095px;width:1876px;height:52px;background:#323232;"></div>
<div style="position:absolute;left:275.2px;top:159px;width:2px;height:1300px;background:#393b3c;"></div>
<div style="position:absolute;left:351.3px;top:471px;width:2px;height:312px;background:#393b3c;"></div>
<div style="position:absolute;left:427.3px;top:523px;width:2px;height:52px;background:#393b3c;"></div>
<div style="position:absolute;left:427.3px;top:731px;width:2px;height:52px;background:#393b3c;"></div>
<div style="position:absolute;left:351.3px;top:1147px;width:2px;height:104px;background:#393b3c;"></div>
<div style="position:absolute;left:180px;top:0;width:2px;height:1438px;background:#555759;"></div>
<div class="ln" style="left:11px;top:4px;color:#606366">362</div>
<div class="c" style="left:194.5px;top:4px;">     <span class="d">* Class representing injection information about an annotated method.</span></div>
<div class="ln" style="left:11px;top:56px;color:#606366">363</div>
<div class="c" style="left:194.5px;top:56px;">     <span class="d">*/</span></div>
<div class="ln" style="left:11px;top:108px;color:#606366">364</div>
<div class="c" style="left:194.5px;top:108px;">    <span class="k">private static class</span> LifecycleElement {</div>
<div class="ln" style="left:11px;top:160px;color:#606366">365</div>
<div class="ln" style="left:11px;top:212px;color:#606366">366</div>
<div class="c" style="left:194.5px;top:212px;">        <span class="k">private final</span> Method <span class="f">method</span><span class="k">;</span></div>
<div class="ln" style="left:11px;top:264px;color:#606366">367</div>
<div class="ln" style="left:11px;top:316px;color:#606366">368</div>
<div class="c" style="left:194.5px;top:316px;">        <span class="k">private final</span> String <span class="f">identifier</span><span class="k">;</span></div>
<div class="ln" style="left:11px;top:368px;color:#606366">369</div>
<div class="ln" style="left:11px;top:420px;color:#606366">370</div>
<div class="c" style="left:194.5px;top:420px;">        <span class="k">public</span> <span class="m">LifecycleElement</span>(Method method) {</div>
<div class="ln" style="left:11px;top:472px;color:#606366">371</div>
<div class="c" style="left:194.5px;top:472px;">            <span class="k">if</span> (method.getParameterCount() != <span class="n">0</span>) {</div>
<div class="ln" style="left:11px;top:524px;color:#606366">372</div>
<div class="c" style="left:194.5px;top:524px;">                <span class="k">throw new</span> IllegalStateException(<span class="s">"Lifecycle method annotation requires a no-arg method: "</span> + method)<span class="k">;</span></div>
<div class="ln" style="left:11px;top:576px;color:#606366">373</div>
<div class="c" style="left:194.5px;top:576px;">            }</div>
<div class="ln" style="left:11px;top:628px;color:#606366">374</div>
<div class="c" style="left:194.5px;top:628px;">            <span class="k">this</span>.<span class="f">method</span> = method<span class="k">;</span></div>
<div class="ln" style="left:11px;top:680px;color:#606366">375</div>
<div class="c" style="left:194.5px;top:680px;">            <span class="k">this</span>.<span class="f">identifier</span> = (Modifier.<span class="i">isPrivate</span>(method.getModifiers()) ?</div>
<div class="ln" style="left:11px;top:732px;color:#606366">376</div>
<div class="c" style="left:194.5px;top:732px;">                    ClassUtils.<span class="i">getQualifiedMethodName</span>(method) : method.getName())<span class="k">;</span></div>
<div class="ln" style="left:11px;top:784px;color:#606366">377</div>
<div class="c" style="left:194.5px;top:784px;">        }</div>
<div class="ln" style="left:11px;top:836px;color:#606366">378</div>
<div class="ln" style="left:11px;top:888px;color:#606366">379</div>
<div class="c" style="left:194.5px;top:888px;">        <span class="k">public</span> Method <span class="m">getMethod</span>() <span class="fd">{</span> <span class="k">return this</span>.<span class="f">method</span><span class="k">;</span><span class="fd"> }</span></div>
<div class="ln" style="left:11px;top:940px;color:#606366">382</div>
<div class="ln" style="left:11px;top:992px;color:#606366">383</div>
<div class="c" style="left:194.5px;top:992px;">        <span class="k">public</span> String <span class="m">getIdentifier</span>() <span class="fd">{</span> <span class="k">return this</span>.<span class="f">identifier</span><span class="k">;</span><span class="fd"> }</span></div>
<div class="ln" style="left:11px;top:1044px;color:#606366">386</div>
<div class="ln" style="left:11px;top:1096px;color:#a4a3a3">387</div>
<div class="c" style="left:194.5px;top:1096px;">        <span class="k">public void</span> <span class="m sel">invoke</span>(Object target) <span class="k">throws</span> Throwable {</div>
<div class="ln" style="left:11px;top:1148px;color:#606366">388</div>
<div class="c" style="left:194.5px;top:1148px;">            ReflectionUtils.<span class="i">makeAccessible</span>(<span class="k">this</span>.<span class="f">method</span>)<span class="k">;</span></div>
<div class="ln" style="left:11px;top:1200px;color:#606366">389</div>
<div class="c" style="left:194.5px;top:1200px;">            <span class="k">this</span>.<span class="f">method</span>.invoke(target<span class="k">,</span> (Object[]) <span class="k">null</span>)<span class="k">;</span></div>
<div class="ln" style="left:11px;top:1252px;color:#606366">390</div>
<div class="c" style="left:194.5px;top:1252px;">        }</div>
<div class="ln" style="left:11px;top:1304px;color:#606366">391</div>
<div class="ln" style="left:11px;top:1356px;color:#606366">392</div>
<div class="c" style="left:194.5px;top:1356px;">        <span class="a">@Override</span></div>
<div class="ln" style="left:11px;top:1408px;color:#606366">393</div>
<div class="c" style="left:194.5px;top:1408px;">        <span class="k">public boolean</span> <span class="m">equals</span>(Object other) {</div>
<svg style="position:absolute;left:170px;top:66px" width="22" height="28" viewBox="0 0 22 28"><path d="M1 11 L11 1 L21 11 V27 H1 Z" fill="#313335" stroke="#606366" stroke-width="1.8"/><path d="M6 17 H16" stroke="#606366" stroke-width="1.8"/></svg>
<svg style="position:absolute;left:170px;top:124px" width="22" height="28" viewBox="0 0 22 28"><path d="M1 1 H21 V17 L11 27 L1 17 Z" fill="#313335" stroke="#606366" stroke-width="1.8"/><path d="M6 11 H16" stroke="#606366" stroke-width="1.8"/></svg>
<svg style="position:absolute;left:170px;top:436px" width="22" height="28" viewBox="0 0 22 28"><path d="M1 1 H21 V17 L11 27 L1 17 Z" fill="#313335" stroke="#606366" stroke-width="1.8"/><path d="M6 11 H16" stroke="#606366" stroke-width="1.8"/></svg>
<svg style="position:absolute;left:170px;top:488px" width="22" height="28" viewBox="0 0 22 28"><path d="M1 1 H21 V17 L11 27 L1 17 Z" fill="#313335" stroke="#606366" stroke-width="1.8"/><path d="M6 11 H16" stroke="#606366" stroke-width="1.8"/></svg>
<svg style="position:absolute;left:170px;top:586px" width="22" height="28" viewBox="0 0 22 28"><path d="M1 11 L11 1 L21 11 V27 H1 Z" fill="#313335" stroke="#606366" stroke-width="1.8"/><path d="M6 17 H16" stroke="#606366" stroke-width="1.8"/></svg>
<svg style="position:absolute;left:170px;top:794px" width="22" height="28" viewBox="0 0 22 28"><path d="M1 11 L11 1 L21 11 V27 H1 Z" fill="#313335" stroke="#606366" stroke-width="1.8"/><path d="M6 17 H16" stroke="#606366" stroke-width="1.8"/></svg>
<svg style="position:absolute;left:170px;top:903px" width="22" height="28" viewBox="0 0 22 28"><rect x="1" y="1" width="20" height="20" fill="#313335" stroke="#606366" stroke-width="1.8"/><path d="M5 11 H17 M11 5 V17" stroke="#606366" stroke-width="1.8"/></svg>
<svg style="position:absolute;left:170px;top:1007px" width="22" height="28" viewBox="0 0 22 28"><rect x="1" y="1" width="20" height="20" fill="#313335" stroke="#606366" stroke-width="1.8"/><path d="M5 11 H17 M11 5 V17" stroke="#606366" stroke-width="1.8"/></svg>
<svg style="position:absolute;left:170px;top:1112px" width="22" height="28" viewBox="0 0 22 28"><path d="M1 1 H21 V17 L11 27 L1 17 Z" fill="#2b2b2b" stroke="#606366" stroke-width="1.8"/><path d="M6 11 H16" stroke="#606366" stroke-width="1.8"/></svg>
<svg style="position:absolute;left:170px;top:1262px" width="22" height="28" viewBox="0 0 22 28"><path d="M1 11 L11 1 L21 11 V27 H1 Z" fill="#313335" stroke="#606366" stroke-width="1.8"/><path d="M6 17 H16" stroke="#606366" stroke-width="1.8"/></svg>
<svg style="position:absolute;left:170px;top:1424px" width="22" height="28" viewBox="0 0 22 28"><path d="M1 1 H21 V17 L11 27 L1 17 Z" fill="#313335" stroke="#606366" stroke-width="1.8"/><path d="M6 11 H16" stroke="#606366" stroke-width="1.8"/></svg>
<div class="t" style="left:118.5px;top:419px;height:52px;line-height:48px;font-size:27px;font-weight:bold;color:#c4c4c4;">@</div>
<svg style="position:absolute;left:78px;top:1411px" width="36" height="36" viewBox="0 0 36 36"><circle cx="12" cy="20" r="11" fill="#3592c4"/><circle cx="12" cy="20" r="4" fill="none" stroke="#263a47" stroke-width="2.4"/><path d="M26 30 V6 M20 12 L26 4 L32 12" stroke="#db5860" stroke-width="3" fill="none"/></svg>
<div style="position:absolute;left:197px;top:1419px;width:1350px;height:16px;background:rgba(166,166,166,0.28);"></div>
<div style="position:absolute;left:2039px;top:1247px;width:16px;height:102px;background:rgba(166,166,166,0.28);"></div>
<div style="position:absolute;left:197px;top:417px;width:1860px;height:2px;background:#4d4d4d;"></div>
<div style="position:absolute;left:197px;top:885px;width:1860px;height:2px;background:#4d4d4d;"></div>
<div style="position:absolute;left:197px;top:989px;width:1860px;height:2px;background:#4d4d4d;"></div>
<div style="position:absolute;left:197px;top:1093px;width:1860px;height:2px;background:#4d4d4d;"></div>
<div style="position:absolute;left:197px;top:1353px;width:1860px;height:2px;background:#4d4d4d;"></div>
<div style="position:absolute;left:2029px;top:1131px;width:28px;height:4px;background:#0a7d1b;"></div>
<div style="position:absolute;left:2029px;top:1185px;width:28px;height:4px;background:#0a7d1b;"></div>
<div style="position:absolute;left:2029px;top:1325px;width:28px;height:4px;background:#0a7d1b;"></div>
<svg style="position:absolute;left:2031px;top:4px" width="26" height="22" viewBox="0 0 26 22"><path d="M2 11 L9 18 L23 3" stroke="#36a24c" stroke-width="5" fill="none"/></svg>
</div>
<div style="position:absolute;left:757px;top:1606px;width:2057px;height:2px;background:#323232;"></div>
<div style="position:absolute;left:46px;top:1606px;width:711px;height:2px;background:#323232;"></div>
<div style="position:absolute;left:2px;top:1606px;width:44px;height:2px;background:#323232;"></div>
<div style="position:absolute;left:2814px;top:1606px;width:42px;height:2px;background:#323232;"></div>
<div style="position:absolute;left:2px;top:1608px;width:2854px;height:42px;background:#3c3f41;"></div>
<div style="position:absolute;left:2px;top:1650px;width:2854px;height:2px;background:#45484a;"></div>
<svg style="position:absolute;left:66px;top:1616px;" width="26" height="28" viewBox="0 0 26 28"><rect x="2" y="2" width="4.5" height="23" fill="#afb1b3"/><path d="M6 16 H17 V8" stroke="#afb1b3" stroke-width="4.5" fill="none"/><polygon points="9,10 17,1 25,10" fill="#afb1b3"/></svg>
<div class="t" style="left:97px;top:1612.0px;height:40px;line-height:40px;font-size:26px;color:#bbbbbb;letter-spacing:-0.75px;"><u>9</u>: Git</div>
<svg style="position:absolute;left:194px;top:1618px;" width="28" height="28" viewBox="0 0 28 28"><circle cx="10" cy="10" r="7.5" fill="none" stroke="#afb1b3" stroke-width="3.6"/><path d="M15 16 L24 25" stroke="#afb1b3" stroke-width="4.5"/></svg>
<div class="t" style="left:227px;top:1612.0px;height:40px;line-height:40px;font-size:26px;color:#bbbbbb;letter-spacing:-0.87px;"><u>3</u>: Find</div>
<svg style="position:absolute;left:342px;top:1620px;" width="20" height="24" viewBox="0 0 20 24"><polygon points="2,1 18,11 2,21" fill="#afb1b3"/></svg>
<div class="t" style="left:372.2px;top:1612.0px;height:40px;line-height:40px;font-size:26px;color:#bbbbbb;letter-spacing:-1.27px;"><u>4</u>: Run</div>
<svg style="position:absolute;left:485px;top:1620px;" width="22" height="22" viewBox="0 0 22 22"><path d="M1 3 H5 M8 3 H21 M1 10 H5 M8 10 H21 M1 17 H5 M8 17 H21" stroke="#afb1b3" stroke-width="3.4"/></svg>
<div class="t" style="left:514.5px;top:1612.0px;height:40px;line-height:40px;font-size:26px;color:#bbbbbb;letter-spacing:-1.35px;"><u>6</u>: TODO</div>
<svg style="position:absolute;left:653px;top:1620px;" width="24" height="22" viewBox="0 0 24 22"><path d="M1 3 H23 M1 10 H15 M1 17 H19" stroke="#afb1b3" stroke-width="3.4"/></svg>
<div class="t" style="left:684.5px;top:1612.0px;height:40px;line-height:40px;font-size:26px;color:#bbbbbb;letter-spacing:-1.60px;"><u>0</u>: Messages</div>
<svg style="position:absolute;left:855px;top:1616px;" width="28" height="28" viewBox="0 0 28 28"><path d="M2 9 L10 2 L17 5 L14 9 L26 22 L22 26 L10 13 L7 15 Z" fill="#afb1b3"/></svg>
<div class="t" style="left:889.5px;top:1612.0px;height:40px;line-height:40px;font-size:26px;color:#bbbbbb;letter-spacing:-0.50px;">Build</div>
<svg style="position:absolute;left:982px;top:1618px;" width="28" height="24" viewBox="0 0 28 24"><path d="M2 18 C2 8 12 6 24 1 C26 10 24 22 12 22 C8 22 4 21 2 18 Z" fill="#afb1b3"/></svg>
<div class="t" style="left:1015.3px;top:1612.0px;height:40px;line-height:40px;font-size:26px;color:#bbbbbb;letter-spacing:-0.76px;">Spring</div>
<svg style="position:absolute;left:1129px;top:1619px;" width="24" height="22" viewBox="0 0 24 22"><rect x="1" y="1" width="22" height="20" fill="#afb1b3"/><path d="M5 6 L10 10 L5 14 M12 16 H19" stroke="#3c3f41" stroke-width="2" fill="none"/></svg>
<div class="t" style="left:1162.6px;top:1612.0px;height:40px;line-height:40px;font-size:26px;color:#bbbbbb;letter-spacing:-0.63px;">Terminal</div>
<svg style="position:absolute;left:2655px;top:1617px;" width="28" height="28" viewBox="0 0 28 28"><path d="M14 1 A13 13 0 1 0 14 27 H27 V14 A13 13 0 0 0 14 1 Z" fill="#499c54"/><text x="14" y="21" text-anchor="middle" font-family="Liberation Sans, sans-serif" font-weight="bold" font-size="19" fill="#fff" style="text-rendering:geometricPrecision">1</text></svg>
<div class="t" style="left:2690px;top:1612.0px;height:40px;line-height:40px;font-size:26px;color:#bbbbbb;letter-spacing:-1.39px;">Event Log</div>
<div style="position:absolute;left:2px;top:1652px;width:2854px;height:39px;background:#3c3f41;"></div>
<div style="position:absolute;left:2px;top:1652px;width:60px;height:39px;background:#3c3f41;border-radius:0 0 0 13px;"></div>
<svg style="position:absolute;left:14px;top:1658px;" width="26" height="26" viewBox="0 0 26 26"><rect x="6" y="2" width="18" height="18" fill="none" stroke="#afb1b3" stroke-width="2"/><path d="M2 6 V24 H20" stroke="#afb1b3" stroke-width="2" fill="none"/></svg>
<div class="t" style="left:55.5px;top:1651.0px;height:40px;line-height:40px;font-size:26px;color:#bbbbbb;letter-spacing:-0.12px;">Find usages of the symbol at caret</div>
<div class="t" style="left:2193px;top:1651.0px;height:40px;line-height:40px;font-size:26px;color:#bbbbbb;letter-spacing:-0.28px;">6 chars</div>
<div class="t" style="left:2309.5px;top:1651.0px;height:40px;line-height:40px;font-size:26px;color:#bbbbbb;letter-spacing:-0.42px;">387:23</div>
<div class="t" style="left:2409.5px;top:1651.0px;height:40px;line-height:40px;font-size:26px;color:#8a8c8e;letter-spacing:-1.60px;">LF</div>
<div class="t" style="left:2460px;top:1651.0px;height:40px;line-height:40px;font-size:26px;color:#8a8c8e;">UTF-8</div>
<div style="position:absolute;left:1376px;top:908px;width:630px;height:785px;background:#3c3f41;box-sizing:border-box;border:2px solid #525557;border-bottom:none;overflow:hidden;">
<div class="t" style="left:47.299999999999955px;top:0px;height:42px;line-height:42px;font-size:26px;letter-spacing:0.07px;color:#bbbbbb">Show Context Actions</div>
<div class="t" style="left:490.3px;top:0px;height:42px;line-height:42px;font-size:26px;letter-spacing:0.56px;color:#bbbbbb;">Alt+Enter</div>
<svg style="position:absolute;left:7px;top:5px" width="32" height="32" viewBox="0 0 32 32"><path d="M16 2 C9 2 6 7 6 11 C6 15 9 17 10 21 H22 C23 17 26 15 26 11 C26 7 23 2 16 2 Z" fill="#afb1b3"/><path d="M11 24 H21 M12 27.5 H20 M14 30.5 H18" stroke="#afb1b3" stroke-width="2"/></svg>
<div style="position:absolute;left:0;top:44px;width:626px;height:2px;background:#515456;"></div>
<div class="t" style="left:47.299999999999955px;top:48px;height:42px;line-height:42px;font-size:26px;letter-spacing:1.25px;color:#bbbbbb">Cu<u>t</u></div>
<div class="t" style="left:527.2px;top:48px;height:42px;line-height:42px;font-size:26px;letter-spacing:0.47px;color:#bbbbbb;">Ctrl+X</div>
<svg style="position:absolute;left:7px;top:53px" width="32" height="32" viewBox="0 0 32 32"><circle cx="7" cy="8" r="4" fill="none" stroke="#afb1b3" stroke-width="2.6"/><circle cx="7" cy="24" r="4" fill="none" stroke="#afb1b3" stroke-width="2.6"/><path d="M10 10 L29 27 M10 22 L29 5" stroke="#afb1b3" stroke-width="3"/></svg>
<div class="t" style="left:47.299999999999955px;top:90px;height:42px;line-height:42px;font-size:26px;letter-spacing:0.05px;color:#bbbbbb"><u>C</u>opy</div>
<div class="t" style="left:527.2px;top:90px;height:42px;line-height:42px;font-size:26px;letter-spacing:0.23px;color:#bbbbbb;">Ctrl+C</div>
<svg style="position:absolute;left:7px;top:95px" width="32" height="32" viewBox="0 0 32 32"><path d="M4 22 V4 H20" stroke="#afb1b3" stroke-width="2.6" fill="none"/><rect x="9" y="9" width="18" height="21" fill="#afb1b3"/><path d="M13 15 H23 M13 19.5 H23 M13 24 H23" stroke="#3c3f41" stroke-width="2"/></svg>
<div class="t" style="left:47.299999999999955px;top:132px;height:42px;line-height:42px;font-size:26px;letter-spacing:-0.24px;color:#bbbbbb">Copy as Plain Text</div>
<div class="t" style="left:47.299999999999955px;top:174px;height:42px;line-height:42px;font-size:26px;letter-spacing:-0.31px;color:#bbbbbb">Cop<u>y</u> Reference</div>
<div class="t" style="left:407.3px;top:174px;height:42px;line-height:42px;font-size:26px;letter-spacing:0.54px;color:#bbbbbb;">Ctrl+Alt+Shift+C</div>
<div class="t" style="left:47.299999999999955px;top:216px;height:42px;line-height:42px;font-size:26px;letter-spacing:-0.58px;color:#bbbbbb"><u>P</u>aste</div>
<div class="t" style="left:527.2px;top:216px;height:42px;line-height:42px;font-size:26px;letter-spacing:0.47px;color:#bbbbbb;">Ctrl+V</div>
<svg style="position:absolute;left:7px;top:221px" width="32" height="32" viewBox="0 0 32 32"><rect x="6" y="6" width="20" height="24" fill="#afb1b3"/><rect x="11" y="12" width="10" height="13" fill="#3c3f41"/><rect x="12" y="3" width="8" height="5" fill="#afb1b3"/></svg>
<div class="t" style="left:47.299999999999955px;top:258px;height:42px;line-height:42px;font-size:26px;letter-spacing:-0.07px;color:#bbbbbb">Past<u>e</u> from History...</div>
<div class="t" style="left:457.2px;top:258px;height:42px;line-height:42px;font-size:26px;letter-spacing:0.47px;color:#bbbbbb;">Ctrl+Shift+V</div>
<div class="t" style="left:47.299999999999955px;top:300px;height:42px;line-height:42px;font-size:26px;letter-spacing:0.19px;color:#bbbbbb">Paste <u>w</u>ithout Formatting</div>
<div class="t" style="left:407.3px;top:300px;height:42px;line-height:42px;font-size:26px;letter-spacing:0.63px;color:#bbbbbb;">Ctrl+Alt+Shift+V</div>
<div class="t" style="left:47.299999999999955px;top:342px;height:42px;line-height:42px;font-size:26px;letter-spacing:0.04px;color:#bbbbbb">Column Selection <u>M</u>ode</div>
<div class="t" style="left:415.7px;top:342px;height:42px;line-height:42px;font-size:26px;letter-spacing:0.60px;color:#bbbbbb;">Alt+Shift+Insert</div>
<div style="position:absolute;left:0;top:386px;width:626px;height:2px;background:#515456;"></div>
<div style="position:absolute;left:0;top:390px;width:626px;height:42px;background:#4b6eaf;"></div>
<div class="t" style="left:47.299999999999955px;top:390px;height:42px;line-height:42px;font-size:26px;letter-spacing:-0.55px;color:#bbbbbb">Find <u>U</u>sages</div>
<div class="t" style="left:524.0px;top:390px;height:42px;line-height:42px;font-size:26px;letter-spacing:0.52px;color:#bbbbbb;">Alt+F7</div>
<div class="t" style="left:47.299999999999955px;top:432px;height:42px;line-height:42px;font-size:26px;letter-spacing:0.05px;color:#bbbbbb"><u>R</u>efactor</div>
<svg style="position:absolute;left:599px;top:444px" width="14" height="18" viewBox="0 0 14 18"><polygon points="1,1 13,9 1,17" fill="#9a9da0"/></svg>
<div style="position:absolute;left:0;top:476px;width:626px;height:2px;background:#515456;"></div>
<div class="t" style="left:47.299999999999955px;top:480px;height:42px;line-height:42px;font-size:26px;letter-spacing:0.22px;color:#bbbbbb">Folding</div>
<svg style="position:absolute;left:599px;top:492px" width="14" height="18" viewBox="0 0 14 18"><polygon points="1,1 13,9 1,17" fill="#9a9da0"/></svg>
<div class="t" style="left:47.299999999999955px;top:522px;height:42px;line-height:42px;font-size:26px;letter-spacing:-0.09px;color:#bbbbbb">Analy<u>z</u>e</div>
<svg style="position:absolute;left:599px;top:534px" width="14" height="18" viewBox="0 0 14 18"><polygon points="1,1 13,9 1,17" fill="#9a9da0"/></svg>
<div style="position:absolute;left:0;top:566px;width:626px;height:2px;background:#515456;"></div>
<div class="t" style="left:47.299999999999955px;top:570px;height:42px;line-height:42px;font-size:26px;letter-spacing:-0.12px;color:#bbbbbb"><u>S</u>earch with Google</div>
<div style="position:absolute;left:0;top:614px;width:626px;height:2px;background:#515456;"></div>
<div class="t" style="left:47.299999999999955px;top:618px;height:42px;line-height:42px;font-size:26px;letter-spacing:0.34px;color:#bbbbbb">Go To</div>
<svg style="position:absolute;left:599px;top:630px" width="14" height="18" viewBox="0 0 14 18"><polygon points="1,1 13,9 1,17" fill="#9a9da0"/></svg>
<div class="t" style="left:47.299999999999955px;top:660px;height:42px;line-height:42px;font-size:26px;letter-spacing:-0.38px;color:#bbbbbb">Generate...</div>
<div class="t" style="left:486.0px;top:660px;height:42px;line-height:42px;font-size:26px;letter-spacing:0.64px;color:#bbbbbb;">Alt+Insert</div>
<div style="position:absolute;left:0;top:704px;width:626px;height:2px;background:#515456;"></div>
<div class="t" style="left:47.299999999999955px;top:708px;height:42px;line-height:42px;font-size:26px;letter-spacing:-0.35px;color:#bbbbbb">File <u>P</u>ath</div>
<div class="t" style="left:451.8px;top:708px;height:42px;line-height:42px;font-size:26px;letter-spacing:0.44px;color:#bbbbbb;">Ctrl+Alt+F12</div>
<div style="position:absolute;left:0;top:752px;width:626px;height:2px;background:#515456;"></div>
<div class="t" style="left:47.299999999999955px;top:756px;height:42px;line-height:42px;font-size:26px;letter-spacing:-0.01px;color:#bbbbbb">Compare with Clip<u>b</u>oard</div>
<svg style="position:absolute;left:7px;top:761px" width="32" height="32" viewBox="0 0 32 32"><path d="M4 8 H12 V4 H18 V8 H22 V14" stroke="#afb1b3" stroke-width="2.6" fill="none"/><path d="M4 8 V30 H12" stroke="#afb1b3" stroke-width="2.6" fill="none"/><path d="M30 22 H16 M22 15 L15 22 L22 29" stroke="#3592c4" stroke-width="4" fill="none"/></svg>
</div>
<svg style="position:absolute;left:0;top:0;pointer-events:none" width="2858" height="1693" viewBox="0 0 2858 1693"><polygon points="1178.8,1177.2 1302.4,1265.4 1298.5,1268.5 1317.0,1271.5 1307.5,1255.3 1306.0,1260.1 1179.2,1176.8" fill="#fb3235"/><polygon points="2486.9,1188.7 2023.9,1313.3 2024.6,1310.0 2010.4,1322.5 2029.0,1325.8 2026.7,1323.4 2487.1,1189.3" fill="#fb3235"/></svg>
<div style="position:absolute;left:2540px;top:1653px;width:318px;height:40px;background:#ffffff;box-shadow:0 -1px 0 #c9d6ea;"></div>
<div style="position:absolute;left:2822px;top:1653px;width:36px;height:40px;background:linear-gradient(90deg,#e8f6f4,#f6eef8);"></div>
<svg style="position:absolute;left:2508px;top:1642px;" width="80" height="51" viewBox="0 0 80 51"><g transform="rotate(-15 40 30)"><rect x="9" y="6" width="58" height="58" rx="7" fill="#f4581c"/><text x="38" y="58" text-anchor="middle" font-family="Liberation Sans, sans-serif" font-weight="bold" font-style="italic" font-size="66" fill="#ffffff">S</text></g></svg>
<div class="t" style="left:2589px;top:1657.0px;height:40px;line-height:40px;font-size:29px;color:#0a66dc;font-weight:bold;font-family:'Noto Sans CJK SC',sans-serif;">中</div>
<svg style="position:absolute;left:2636px;top:1660px;" width="222" height="33" viewBox="0 0 222 33">
<circle cx="9" cy="12.5" r="3.2" fill="#0a66dc"/><path d="M20 20 h7 q1 6 -6 11 z" fill="#0a66dc"/>
<rect x="59" y="3" width="12" height="24" rx="6" fill="#0a66dc"/><path d="M53 18 a12 12 0 0 0 24 0 M65 30 V33" stroke="#0a66dc" stroke-width="3" fill="none"/>
<rect x="100" y="9" width="26" height="20" rx="3" fill="none" stroke="#0a66dc" stroke-width="4"/><path d="M100 19 H126 M113 9 V29" stroke="#0a66dc" stroke-width="3"/>
<path d="M146 10 L155 6 Q160 10 166 6 L175 10 L171 18 H168 V33 H153 V18 H150 Z" fill="#0a66dc"/>
<rect x="196" y="7" width="12" height="12" rx="3.5" fill="#7a6fd8"/><rect x="211" y="7" width="12" height="12" rx="3.5" fill="#4f6ee6"/><rect x="196" y="22" width="12" height="12" rx="3.5" fill="#b06aa6"/><rect x="211" y="22" width="12" height="12" rx="3.5" fill="#6a6fe0"/>
</svg>
<div class="t" style="left:2632px;top:1656px;height:40px;line-height:40px;font-size:19px;color:#9a9a9a;font-family:'Liberation Sans','Noto Sans CJK SC',sans-serif;text-shadow:0 0 1px #ffffff;opacity:0.9">CSDN @只因为你而温柔</div>
</body></html>
